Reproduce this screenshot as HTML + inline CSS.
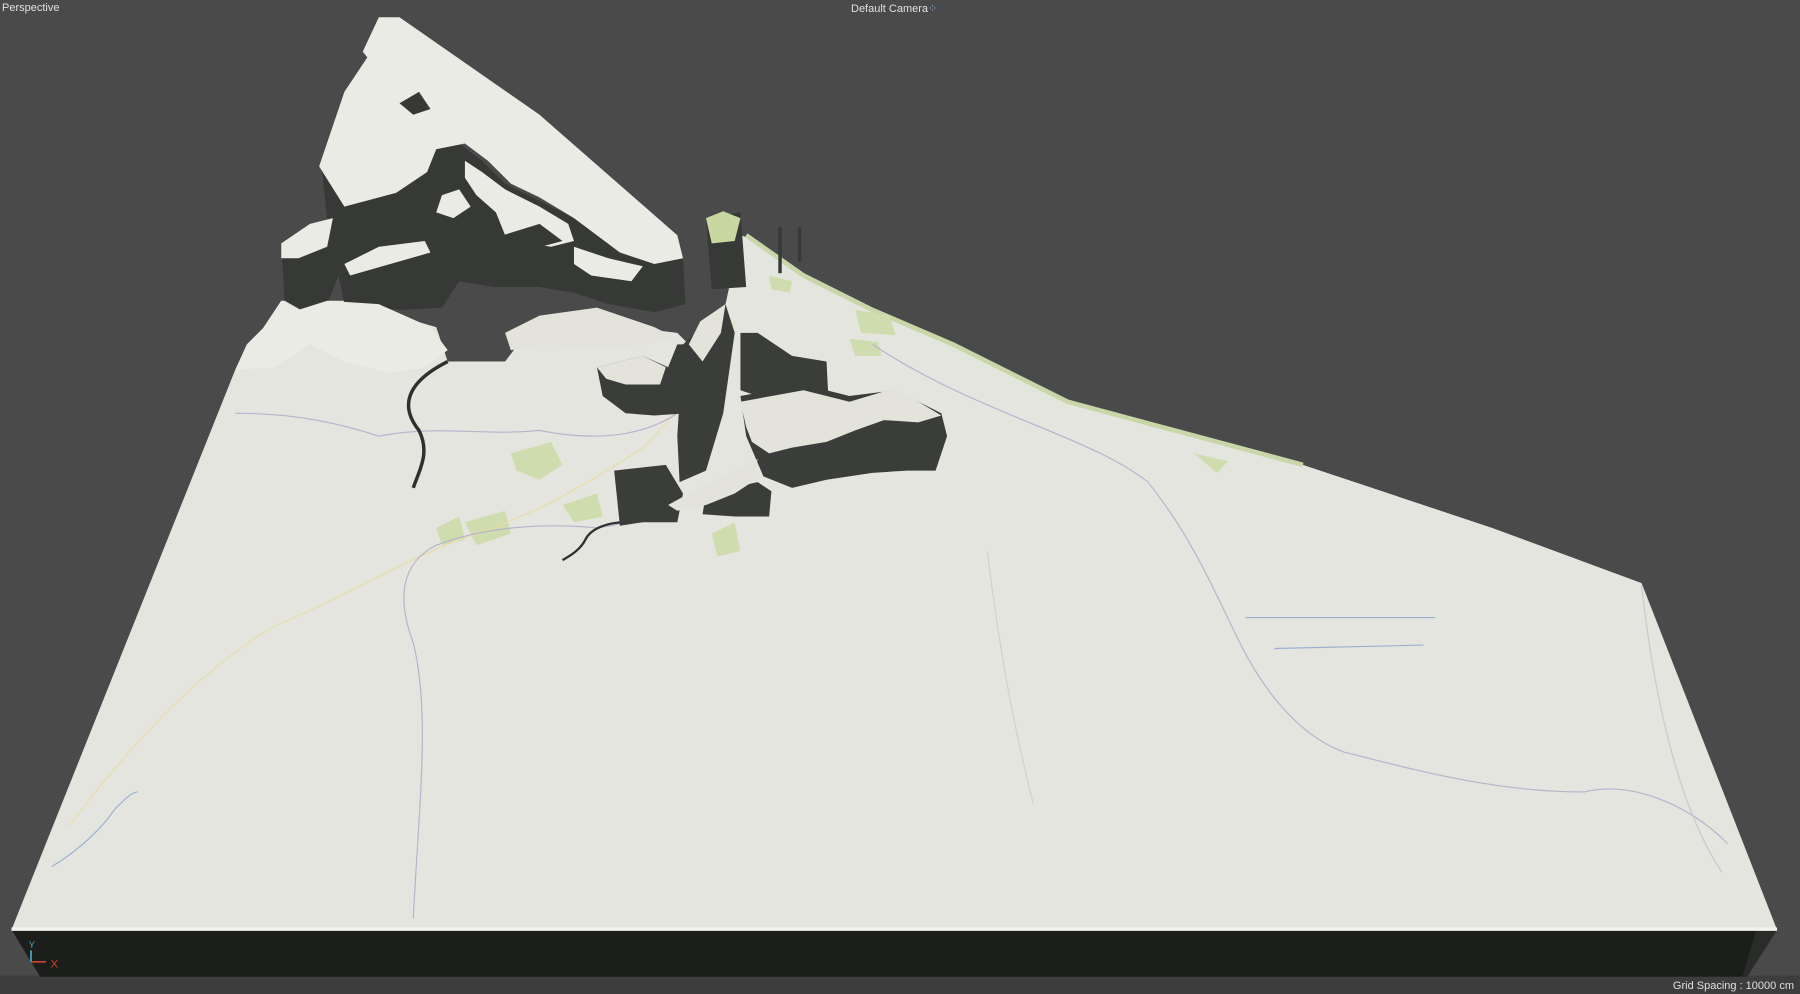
<!DOCTYPE html>
<html><head><meta charset="utf-8"><style>
html,body{margin:0;padding:0;width:1800px;height:994px;overflow:hidden;background:#4a4a4a;font-family:"Liberation Sans",sans-serif}
svg{position:absolute;left:0;top:0}
.t{position:absolute;font-size:11px;color:#e0e0e0}
</style></head><body>
<svg width="1800" height="994" viewBox="0 0 1568 866" preserveAspectRatio="none">
<rect width="1568" height="866" fill="#4a4a4a"/>
<rect x="0" y="850" width="1568" height="16" fill="#3d3d3d"/>
<polygon points="10,810 1548,810 1522,851 35,851" fill="#1c1e1c"/>
<polygon points="1530,810 1548,810 1522,851 1518,851" fill="#2a2c2a"/>
<polygon fill="#e5e5df" points="10,810 205,322 245,262 300,262 380,285 390,315 440,315 470,275 590,290 600,300 632,265 645,205 660,210 700,240 760,270 830,300 930,350 1135,405 1300,460 1430,508 1548,810"/>
<rect x="10" y="808" width="1538" height="3" fill="#f2f2ee"/>
<polyline points="650,205 700,240 760,270 830,300 930,350 1135,405" fill="none" stroke="#c8d6a8" stroke-width="4"/>
<g fill="#cfdcae">
<polygon points="445,395 480,385 490,405 470,418 450,410"/>
<polygon points="405,455 440,445 445,465 415,475"/>
<polygon points="380,460 400,450 405,470 385,475"/>
<polygon points="620,465 640,455 645,480 625,485"/>
<polygon points="745,270 775,275 780,292 750,290"/>
<polygon points="740,295 765,298 768,310 745,310"/>
<polygon points="670,240 690,245 688,255 672,252"/>
<polygon points="1040,395 1070,402 1060,412"/>
<polygon points="490,440 520,430 525,450 500,455"/>
</g>
<g fill="none" stroke-width="1">
<path d="M60,720 C120,640 180,580 240,545 C300,520 350,490 400,470 C450,455 500,430 560,390 C600,350 620,320 640,280" stroke="#e8dca8"/>
<path d="M360,800 C365,700 375,620 360,560 C345,520 350,490 380,475 C420,460 470,455 520,460 C560,455 620,430 660,400" stroke="#b9b0cc"/>
<path d="M205,360 C260,360 300,370 330,380 C380,370 420,380 470,375 C520,385 560,380 590,360" stroke="#b9b0cc"/>
<path d="M760,300 C850,360 950,380 1000,420 C1040,470 1060,520 1080,560 C1100,600 1130,640 1170,655 C1230,670 1300,690 1380,690 C1420,680 1470,700 1505,735" stroke="#b9b0cc"/>
<path d="M1085,538 L1250,538" stroke="#9ab0d0"/>
<path d="M1110,565 L1240,562" stroke="#9ab0d0"/>
<path d="M45,755 C70,740 90,720 100,705 C110,695 115,690 120,690" stroke="#9ab0d0"/>
<path d="M1430,510 C1440,600 1460,700 1500,760" stroke="#c5c8cc"/>
<path d="M860,480 C870,560 880,620 900,700" stroke="#d0d0cc"/>
</g>
<path d="M390,315 C360,330 345,350 365,375 C375,395 365,410 360,425" fill="none" stroke="#2e302e" stroke-width="3"/>
<path d="M545,455 C530,455 515,460 510,470 C505,480 495,485 490,488" fill="none" stroke="#2e302e" stroke-width="2"/>
<g fill="#3a3d3a">
<polygon points="520,320 560,310 582,320 590,300 600,300 598,360 570,362 545,360 525,345"/>
<polygon points="595,300 632,265 640,290 630,360 615,410 592,420 590,380"/>
<polygon points="645,290 660,290 690,310 720,315 722,355 690,355 660,345 645,340"/>
<polygon points="645,345 700,335 740,345 780,340 820,360 825,380 815,410 790,410 760,412 720,418 690,425 665,415 650,380"/>
<polygon points="535,410 580,405 595,430 590,455 560,455 540,458"/>
<polygon points="615,430 660,420 672,428 670,450 640,450 612,448"/>
</g>
<g fill="#e3e3dc">
<polygon points="440,290 470,275 520,268 570,285 590,295 560,300 520,305 480,300 445,305"/>
<polygon points="520,320 560,310 580,320 575,335 545,335 528,330"/>
<polygon points="600,300 610,280 632,265 628,290 612,315"/>
<polygon points="645,350 700,340 740,350 780,338 820,362 800,368 770,366 745,375 720,385 690,390 670,395 655,385 650,372"/>
<polygon points="582,440 600,430 640,410 660,400 655,420 640,430 615,440 590,445"/>
</g>
<g fill="#363936">
<polygon points="280,145 300,140 330,150 380,130 400,125 420,140 440,160 470,175 500,190 540,220 570,230 595,225 597,265 570,272 530,265 500,255 470,250 430,250 400,245 385,268 350,270 330,268 300,265 285,190"/>
<polygon points="245,212 270,195 290,190 295,240 285,265 262,270 248,262"/>
<polygon points="300,230 330,215 370,210 380,255 345,268 305,268"/>
<polygon points="615,190 645,185 650,250 620,252"/>
<rect x="678" y="198" width="3" height="40"/>
<rect x="695" y="198" width="3" height="30"/>
</g>
<g fill="#ebebe6">
<polygon points="330,15 348,15 470,100 590,205 595,225 570,230 540,220 500,190 470,172 445,160 425,140 405,125 380,130 372,150 345,168 300,180 278,145 300,80 320,50 316,45"/>
<polygon points="245,212 270,195 290,190 285,215 260,225 245,225"/>
<polygon points="300,230 330,215 370,210 375,220 340,230 305,240"/>
<polygon points="205,322 215,300 230,285 245,262 260,270 285,262 330,265 375,285 390,305 370,320 340,325 300,315 270,300 240,320"/>
<polygon points="405,140 420,150 440,165 470,180 495,195 500,210 480,215 460,212 440,205 432,185 415,170 405,155"/>
<polygon points="385,170 400,165 410,180 395,190 380,185"/>
<polygon points="500,215 530,225 560,232 550,245 515,240 500,230"/>
</g>
<polygon points="348,90 365,80 375,95 360,100" fill="#363936"/>
<polygon points="438,205 470,195 490,210 460,218" fill="#363936"/>
<polygon points="615,190 630,184 645,190 640,210 620,212" fill="#c8d8a0"/>
<g stroke-width="1.5" fill="none">
<path d="M27,828 L27,838" stroke="#4aa8c8"/>
<path d="M27,838 L40,838" stroke="#c84030"/>
</g>
<text x="25" y="826" font-size="8" fill="#4aa8c8" font-family="Liberation Sans">Y</text>
<text x="44" y="843" font-size="10" fill="#d04030" font-family="Liberation Sans">X</text>
</svg>
<div class="t" style="left:2px;top:2px">Perspective</div>
<div class="t" style="left:851px;top:2px">Default Camera<span style="color:#8ab4e0">⁘</span></div>
<div class="t" style="right:6px;bottom:2px">Grid Spacing : 10000 cm</div>
</body></html>
